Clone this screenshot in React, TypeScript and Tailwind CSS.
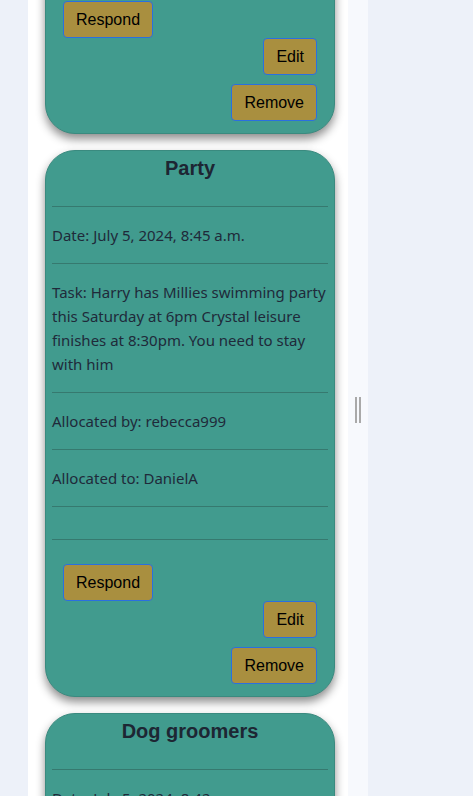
import React from "react";

type Task = {
  title: string;
  date: string;
  task: string;
  by: string;
  to: string;
};

const Btn = ({ children }: { children: React.ReactNode }) => (
  <button className="h-[37px] px-3 rounded-[4px] border border-[#2b6fe0] bg-[#a98f3f] text-[16px] leading-none text-black font-['Liberation_Sans',Arial,sans-serif]">
    {children}
  </button>
);

const Hr = () => <div className="h-px bg-[#36796f]" />;

const Row = ({ children }: { children: React.ReactNode }) => (
  <div className="py-4 text-[15px] leading-6 text-[#1f2a3a]">{children}</div>
);

const Card = ({ t }: { t: Task }) => (
  <div className="w-[290px] shrink-0 rounded-[30px] border border-[#3a8a7f] bg-[#419b8e] px-[6px] pb-3 shadow-[0_5px_10px_rgba(0,0,0,0.45)] font-['Noto_Sans',sans-serif]">
    <h2 className="pt-[5px] mb-[26px] text-center text-[20px] leading-6 font-bold text-[#1d2633] font-['Liberation_Sans',Arial,sans-serif]">
      {t.title}
    </h2>
    <Hr />
    <Row>Date: {t.date}</Row>
    <Hr />
    <Row>Task: {t.task}</Row>
    <Hr />
    <Row>Allocated by: {t.by}</Row>
    <Hr />
    <Row>Allocated to: {t.to}</Row>
    <Hr />
    <div className="h-8" />
    <Hr />
    <div className="flex flex-col px-[11px] pt-6">
      <div className="flex">
        <Btn>Respond</Btn>
      </div>
      <div className="flex justify-end">
        <Btn>Edit</Btn>
      </div>
      <div className="flex justify-end mt-[9px]">
        <Btn>Remove</Btn>
      </div>
    </div>
  </div>
);

const tasks: Task[] = [
  {
    title: "School run",
    date: "July 5, 2024, 8:40 a.m.",
    task: "Pick up the kids from school on Friday at 3pm and take them to their grandmother's house",
    by: "rebecca999",
    to: "DanielA",
  },
  {
    title: "Party",
    date: "July 5, 2024, 8:45 a.m.",
    task: "Harry has Millies swimming party this Saturday at 6pm Crystal leisure finishes at 8:30pm. You need to stay with him",
    by: "rebecca999",
    to: "DanielA",
  },
  {
    title: "Dog groomers",
    date: "July 5, 2024, 8:42 a.m.",
    task: "Take the dog to the groomers on Monday morning at 10am",
    by: "rebecca999",
    to: "DanielA",
  },
];

export default function App() {
  return (
    <div className="flex h-[796px] w-[473px] overflow-hidden bg-[#edf1f9]">
      <div className="w-[28px] shrink-0" />
      <div className="w-[320px] shrink-0 bg-white pl-[17px]">
        <div className="-mt-[389px] flex flex-col gap-4">
          {tasks.map((t) => (
            <Card key={t.title} t={t} />
          ))}
        </div>
      </div>
      <div className="w-[20px] shrink-0 bg-[#f7f9fd] flex justify-center">
        <div className="mt-[397px] flex gap-[2px] h-[26px]">
          <div className="w-[2px] h-full bg-[#a9a9a9]" />
          <div className="w-[2px] h-full bg-[#a9a9a9]" />
        </div>
      </div>
      <div className="flex-1" />
    </div>
  );
}
